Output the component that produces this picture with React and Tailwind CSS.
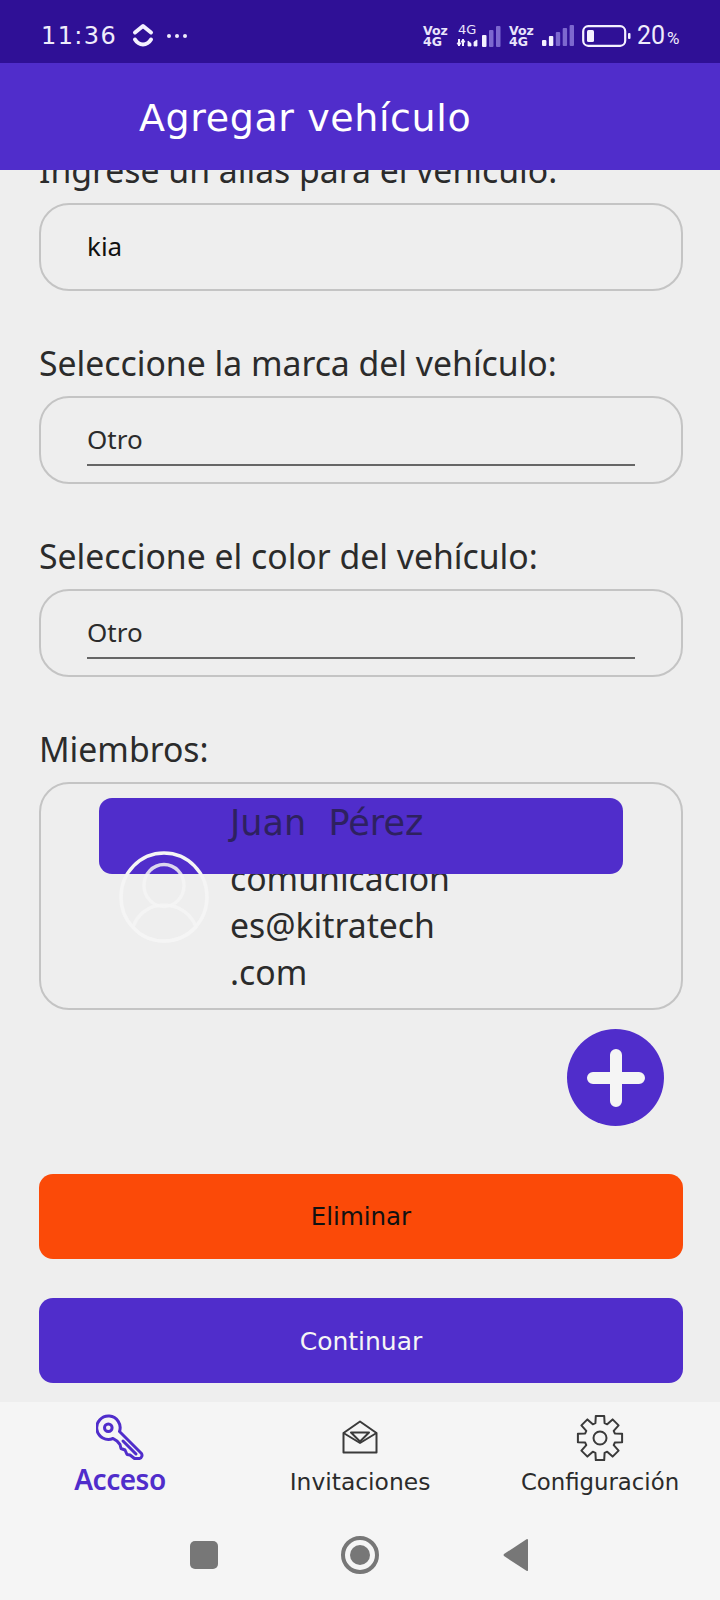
import { useMemo } from 'react';

const noto = "font-['Noto_Sans','Open_Sans',sans-serif]";
const deja = "font-['DejaVu_Sans',sans-serif]";

function Signal({ solid, className }) {
  // barras de la señal: las primeras llenas, el resto tenues
  const bars = [6, 10, 14, 18, 21];
  return (
    <svg width="32" height="21" viewBox="0 0 32 21" className={className}>
      {bars.map((h, i) => (
        <rect key={i} x={i * 6.9} y={21 - h} width="4.4" height={h} rx="1" fill={i < solid ? '#f4f1ff' : '#7d68cf'} />
      ))}
    </svg>
  );
}

function Voz() {
  return (
    <div className={`${deja} w-[25px] text-[12.5px] font-bold leading-[11px] text-[#e9e5fb]`}>
      Voz
      <br />
      4G
    </div>
  );
}

function StatusBar() {
  return (
    <div className="flex h-[63px] items-center justify-between bg-[#2f1096] pl-[41px] pr-[36px] pt-[8px] text-[#efecfb]">
      <div className="flex items-center">
        <span className={`${deja} text-[24px] tracking-[1.4px]`}>11:36</span>
        <svg width="22" height="26" viewBox="0 0 22 26" className="ml-[15px]" fill="none" stroke="#f4f1ff" strokeWidth="4" strokeLinecap="round" strokeLinejoin="round">
          <path d="M3 9.5 11 3l8 6.5" />
          <path d="M3 16.5c4 6.5 12 6.500 16 0" />
        </svg>
        <div className="ml-[13px] flex gap-[4px]">
          <span className="size-[4px] rounded-full bg-[#efecfb]" />
          <span className="size-[4px] rounded-full bg-[#efecfb]" />
          <span className="size-[4px] rounded-full bg-[#efecfb]" />
        </div>
      </div>
      <div className="flex items-center">
        <Voz />
        <div className="relative ml-[8px] h-[22px] w-[46px]">
          <span className={`${deja} absolute left-[2px] top-[-2px] text-[13px] font-medium leading-[13px] text-[#e9e5fb]`}>4G</span>
          <svg width="46" height="22" viewBox="0 0 46 22" className="absolute inset-0">
            <path d="M3 14v7M7 21v-7" stroke="#f4f1ff" strokeWidth="2" />
            <path d="M1 18l2 3 2-3ZM5 17l2-3 2 3ZM12 21v-5l3 2.500v2.500ZM18 21v-4l3-2v6Z" stroke="#f4f1ff" strokeWidth="0.8" fill="#f4f1ff" />
            <rect x="26" y="10" width="4.500" height="12" rx="1" fill="#f4f1ff" />
            <rect x="33" y="5" width="4.500" height="17" rx="1" fill="#7d68cf" />
            <rect x="40" y="1" width="4.500" height="21" rx="1" fill="#7d68cf" />
          </svg>
        </div>
        <div className="ml-[7px]">
          <Voz />
        </div>
        <Signal solid={2} className="ml-[8px]" />
        <svg width="49" height="22" viewBox="0 0 49 22" className="ml-[8px]">
          <rect x="1.2" y="1.2" width="42" height="19.6" rx="5" fill="none" stroke="#f4f1ff" strokeWidth="2.2" />
          <rect x="5" y="5" width="7" height="12" rx="1.5" fill="#f4f1ff" />
          <rect x="46" y="8" width="2.5" height="6" rx="1" fill="#f4f1ff" />
        </svg>
        <span className="ml-[6px] w-[28px] font-['Roboto',sans-serif] text-[25px] leading-none">20</span>
        <span className="ml-[2px] mt-[5px] w-[17px] font-['Roboto',sans-serif] text-[17px] leading-none">%</span>
      </div>
    </div>
  );
}

function Field({ label, value, select }) {
  return (
    <div className="mb-[50px]">
      <div className={`${noto} mb-[11px] h-[44px] whitespace-nowrap text-[33.75px] leading-[45px] text-[#2b2b2b]`}>{label}</div>
      <div className="flex h-[88px] items-center rounded-[30px] border-2 border-[#c4c4c4] pl-[46px] pr-[46px]">
        {select ? (
          <div className={`${noto} mt-[5px] w-full border-b-2 border-[#666666] pb-[7px] pt-[1px] text-[26px] leading-[36px] text-[#2b2b2b]`}>{value}</div>
        ) : (
          <div className={`${noto} -mt-[3px] text-[26px] leading-[36px] text-[#111111]`}>{value}</div>
        )}
      </div>
    </div>
  );
}

function Avatar() {
  return (
    <svg width="90" height="92" viewBox="0 0 90 92" fill="none" stroke="#f5f5f5" strokeWidth="3.5" className="relative z-10 mt-[67px] shrink-0">
      <ellipse cx="45" cy="46" rx="43" ry="44" />
      <ellipse cx="45" cy="34.500" rx="20" ry="21" strokeOpacity="0.85" />
      <path d="M45 54C62 54 73 65 77 76 68 86 56 90 45 90 34 90 22 86 14 76 18 65 28 54 45 54Z" strokeOpacity="0.85" />
    </svg>
  );
}

function MemberCard() {
  return (
    <div className="relative flex h-[228px] rounded-[30px] border-2 border-[#c4c4c4] pl-[78px]">
      <div className="absolute left-[58px] top-[14px] h-[76px] w-[524px] rounded-[13px] bg-[#502dcb]" />
      <Avatar />
      <div className="ml-[21px] flex flex-col">
        <div className={`${deja} relative z-10 mt-[16px] h-[46px] whitespace-pre text-[35px] leading-[46px] text-[#2e2160]`}>Juan  Pérez</div>
        <div className={`${noto} mt-[9px] text-[33.75px] leading-[47px] text-[#2b2b2b]`}>
          comunicacion
          <br />
          es@kitratech
          <br />
          .com
        </div>
      </div>
    </div>
  );
}

function KeyIcon() {
  return (
    <svg width="48" height="48" viewBox="0 0 48 48" fill="none" stroke="#502dcb" strokeWidth="3" strokeLinejoin="round" strokeLinecap="round">
      <path d="M23.500 17.500A11.700 11.700 0 1 0 17 24.500L21 27 24 30.500 25 34.500 29 36 31 40.500 34 41 38.500 44.500H43.500C46 44 46.500 41 45.500 39.500Z" />
      <circle cx="12.300" cy="13.700" r="3.800" />
      <path d="M27 27 40 40" />
    </svg>
  );
}

function EnvelopeIcon() {
  return (
    <svg width="36" height="34" viewBox="0 0 36 34" fill="none" stroke="#3a3a3a" strokeWidth="2" strokeLinejoin="round" className="-mt-[3px]">
      <path d="M1.500 13 18 1.500 34.500 13V32.500H1.500Z" />
      <path d="M9 12.500H27L18 21.500Z" />
      <path d="M1.500 13 18 23 34.500 13" />
    </svg>
  );
}

function GearIcon() {
  // contorno del engranaje de 8 dientes, se calcula una sola vez
  const d = useMemo(() => {
    const pts = [];
    for (let i = 0; i < 8; i++) {
      const a = (i * Math.PI) / 4 - Math.PI / 2;
      const add = (r, o) => pts.push(`${(24 + r * Math.cos(a + o)).toFixed(1)} ${(24 + r * Math.sin(a + o)).toFixed(1)}`);
      add(15.5, -0.3);
      add(22.5, -0.19);
      add(22.5, 0.19);
      add(15.5, 0.3);
    }
    return `M${pts.join('L')}Z`;
  }, []);
  return (
    <svg width="48" height="48" viewBox="0 0 48 48" fill="none" stroke="#3a3a3a" strokeWidth="2" strokeLinejoin="round" className="-ml-[1px]">
      <path d={d} />
      <circle cx="24" cy="24" r="6.500" />
    </svg>
  );
}

function NavItem({ icon, label, active, labelSize = 'text-[23.4px]' }) {
  return (
    <div className="flex flex-col items-center">
      <div className="flex h-[50px] items-center justify-center">{icon}</div>
      <span
        className={
          active
            ? `${noto} -mt-[2px] text-[28px] font-semibold leading-[36px] tracking-[-0.5px] text-[#502dcb]`
            : `${deja} mt-[1px] ${labelSize} leading-[36px] text-[#2b2b2b]`
        }
      >
        {label}
      </span>
    </div>
  );
}

export default function App() {
  return (
    <div className="flex h-[1600px] w-[720px] flex-col overflow-hidden bg-[#eeeeee]">
      <StatusBar />
      <header className={`${deja} relative z-10 flex h-[107px] items-center bg-[#502dcb] pl-[139px] pt-[3px] text-[38px] tracking-[0.6px] text-white`}>
        Agregar vehículo
      </header>

      <main className="flex flex-1 flex-col overflow-hidden pl-[39px] pr-[37px]">
        <div className="-mt-[22px] flex flex-col">
          <Field label="Ingrese un alias para el vehículo:" value="kia" />
          <Field label="Seleccione la marca del vehículo:" value="Otro" select />
          <Field label="Seleccione el color del vehículo:" value="Otro" select />
          <div className={`${noto} mb-[11px] h-[44px] text-[33.75px] leading-[44px] text-[#2b2b2b]`}>Miembros:</div>
          <MemberCard />
          <button className="mr-[19px] mt-[19px] flex size-[97px] items-center justify-center self-end rounded-full bg-[#502dcb]">
            <svg width="60" height="60" viewBox="0 0 60 60" stroke="#f5f5f5" strokeWidth="12" strokeLinecap="round">
              <path d="M30 7v46M7 30h46" />
            </svg>
          </button>
          <button className={`${deja} mt-[48px] h-[85px] rounded-[14px] bg-[#fb4a08] pt-[2px] text-[24.5px] text-[#111111]`}>Eliminar</button>
          <button className={`${deja} mt-[39px] h-[85px] rounded-[14px] bg-[#502dcb] pt-[2px] text-[25px] text-[#f5f5f5]`}>Continuar</button>
        </div>
      </main>

      <nav className="flex h-[198px] flex-col bg-[#f5f5f5]">
        <div className="grid grid-cols-3 pt-[11px]">
          <NavItem icon={<KeyIcon />} label="Acceso" active />
          <NavItem icon={<EnvelopeIcon />} label="Invitaciones" />
          <NavItem icon={<GearIcon />} label="Configuración" labelSize="text-[22.8px]" />
        </div>
        <div className="mx-auto mt-[36px] grid w-[468px] grid-cols-3 items-center justify-items-center">
          <span className="h-[28px] w-[28px] rounded-[5px] bg-[#777777]" />
          <span className="flex size-[38px] items-center justify-center rounded-full border-[4px] border-[#777777]">
            <span className="size-[20px] rounded-full bg-[#777777]" />
          </span>
          <svg width="26" height="32" viewBox="0 0 26 32">
            <path d="M25 1v30a1 1 0 0 1-1.500.8L1 17a1.500 1.500 0 0 1 0-2L23.500.3A1 1 0 0 1 25 1Z" fill="#777777" />
          </svg>
        </div>
      </nav>
    </div>
  );
}
